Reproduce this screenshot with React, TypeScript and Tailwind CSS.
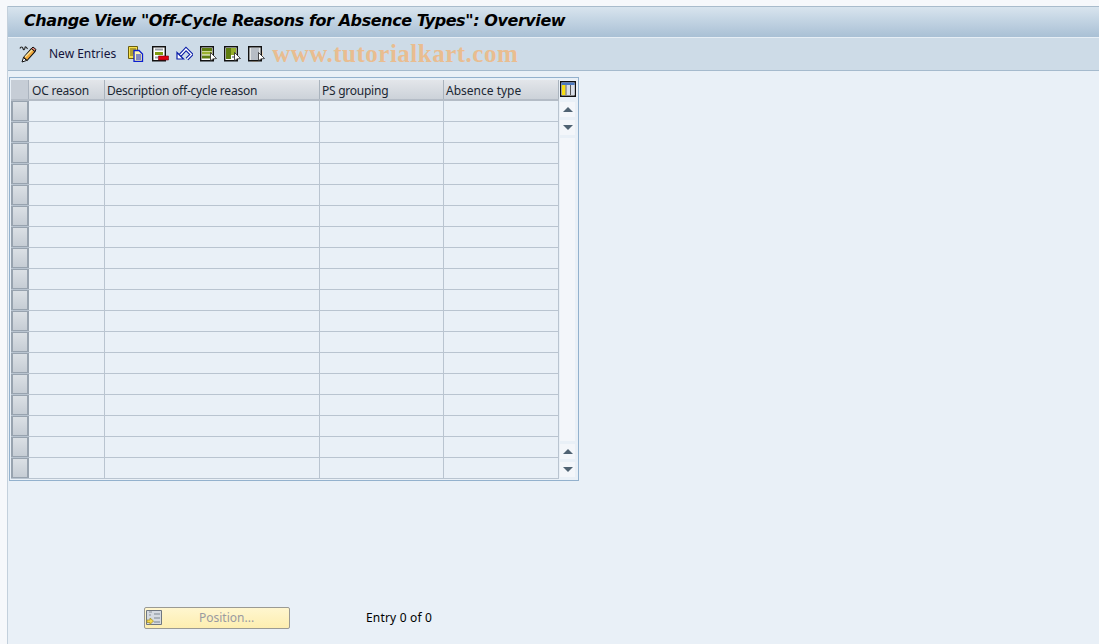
const columns = [
  { label: "OC reason", width: "w-[76px]", text: "tracking-[-0.2px] pl-[3px]" },
  { label: "Description off-cycle reason", width: "w-[215px]", text: "tracking-[-0.22px] pl-[2px]" },
  { label: "PS grouping", width: "w-[124px]", text: "tracking-[-0.25px] pl-[2px]" },
  { label: "Absence type", width: "w-[115px]", text: "tracking-[0px] pl-[2px]" },
];

const rows = Array.from({ length: 18 }, (_, i) => i);

function PencilIcon() {
  return (
    <svg width="18" height="18" viewBox="0 0 18 18" className="block">
      <path d="M1 3.500c.5-2 2.500-2 3 0s2 1 2 -1 2 .5 2.500 1.500" fill="none" stroke="#222" strokeWidth="1.100" />
      <path d="M4.500 12.500l8-9 3.500 3-8 9z" fill="#f2a93b" stroke="#111" strokeWidth="1.100" />
      <path d="M6 12l7.500-7.500" stroke="#fbe7a0" strokeWidth="1.200" />
      <path d="M12.500 3.500l1.500-1.500 3 2.500-1 2z" fill="#f08a7a" stroke="#111" />
      <path d="M4.500 12.500l-1.500 4.500 4.500-1.500z" fill="#fff" stroke="#111" />
    </svg>
  );
}

function CopyIcon() {
  return (
    <svg width="17" height="16" viewBox="0 0 17 16" className="block">
      <path d="M.5.500h9v12h-9z" fill="#f7e04a" stroke="#6a5e10" />
      <path d="M2 3h6M2 5h6M2 7h6M2 9h3" stroke="#6a5e10" />
      <path d="M6 4.500h5l3.500 3.500v7.500H6z" fill="#fff6b0" stroke="#0a1ed0" strokeWidth="1.300" />
      <path d="M8 9h5M8 11h5M8 13h5" stroke="#0a1ed0" />
    </svg>
  );
}

function DeleteIcon() {
  return (
    <svg width="17" height="16" viewBox="0 0 17 16" className="block">
      <path d="M.7.700h12.600v14H.7z" fill="#fff" stroke="#111" strokeWidth="1.400" />
      <path d="M3 3.500h8" stroke="#9aa0a8" strokeWidth="2" />
      <path d="M3 6h8v3H3z" fill="#7f9a10" />
      <path d="M3 11.500h3" stroke="#9aa0a8" strokeWidth="2" />
      <path d="M6.500 10h10v4h-10z" fill="#e00010" stroke="#70000a" strokeWidth="0.600" />
    </svg>
  );
}

function UndoIcon() {
  return (
    <svg width="17" height="16" viewBox="0 0 17 16" className="block">
      <path d="M4 9.500L10 3l5.500 5.500-4.500 4.500" fill="none" stroke="#0a1ea8" strokeWidth="3.600" />
      <path d="M4 9.500L10 3l5.500 5.500-4.500 4.500" fill="none" stroke="#fff" strokeWidth="1.400" />
      <path d="M1 6.500V13h6.500z" fill="#fff" stroke="#0a1ea8" strokeWidth="1.200" />
    </svg>
  );
}

function SelectIcon({ variant }: { variant: "block" | "corner" | "plain" }) {
  return (
    <svg width="17" height="16" viewBox="0 0 17 16" className="block">
      {variant === "plain" && <circle cx="7" cy="8" r="8" fill="#ecd8bd" />}
      <path d="M.7.700h12.600v14H.7z" fill={variant === "plain" ? "#e4e6e6" : "#fff"} stroke="#111" strokeWidth="1.400" />
      {variant === "block" && (
        <>
          <path d="M2 2h10v3H2z" fill="#5f7d10" />
          <path d="M2 5.500h10v3H2z" fill="#9ab030" />
          <path d="M2 9.500h10v3H2z" fill="#5f7d10" />
        </>
      )}
      {variant === "corner" && (
        <>
          <path d="M2 2h10v7H7v4H2z" fill="#5f7d10" />
          <path d="M7 2h5v7H7z" fill="#93ad2a" />
          <path d="M8 11h4" stroke="#9aa0aa" strokeWidth="2" />
        </>
      )}
      {variant === "plain" && (
        <path d="M3 3h8M3 5h8M3 7h8M3 9h8M3 11h8M3 13h8" stroke="#8a94a4" />
      )}
      <path d="M10.500 6.500v8.500l2-2 4-.5z" fill="#fff" stroke="#222" strokeWidth="0.800" />
    </svg>
  );
}

function ColumnsIcon() {
  return (
    <svg width="16" height="16" viewBox="0 0 16 16" className="block">
      <path d="M.7.700h14.600v14.600H.7z" fill="#fff" stroke="#111" strokeWidth="1.400" />
      <path d="M1.500 1.500h13V4h-13z" fill="#4a78c0" />
      <path d="M2 4h3.500v10H2z" fill="#f8de10" />
      <path d="M6.500 4H10v10H6.500zM11 4h3.500v10H11z" fill="#d8dee8" />
      <path d="M6 4v10M10.500 4v10" stroke="#555" />
    </svg>
  );
}

function PositionIcon() {
  return (
    <svg width="16" height="16" viewBox="0 0 16 16" className="block">
      <path d="M.5.500h15v14H.5z" fill="#d5dae0" stroke="#6f7780" />
      <path d="M8 4h6M8 8h6M8 12h6" stroke="#7d8790" />
      <path d="M3 2h3M3 5h2" stroke="#8a9199" />
      <path d="M1 10h3V8l3.500 3L4 14.500V12.500H1z" fill="#f7dc50" stroke="#a08a20" strokeWidth="0.700" />
    </svg>
  );
}

function ScrollButton({ up }: { up: boolean }) {
  return (
    <div className="w-[15px] h-[15px] bg-[#f3f6fa] flex items-center justify-center">
      <div
        className={
          up
            ? "w-0 h-0 border-x-[5px] border-x-transparent border-b-[5px] border-b-[#4f6272]"
            : "w-0 h-0 border-x-[5px] border-x-transparent border-t-[5px] border-t-[#4f6272]"
        }
      />
    </div>
  );
}

export default function App() {
  return (
    <div className="w-[1099px] h-[644px] overflow-hidden bg-[#f6f8fb] pt-[6px] pl-[7px] font-['Noto_Sans',sans-serif] text-[12px] text-[#10203a]">
      <div className="h-[638px] border-l border-[#c3d0dc] bg-[#e9f0f7]">
        <div className="h-[31px] border-t border-[#a9bccc] bg-gradient-to-b from-[#d8e4ee] to-[#a9c0d5] pl-[16px] pb-[2px] flex items-center">
          <h1 className="font-['DejaVu_Sans',sans-serif] font-bold italic text-[16px] tracking-[-0.42px] text-black whitespace-nowrap">
            Change View "Off-Cycle Reasons for Absence Types": Overview
          </h1>
        </div>

        <div className="h-[34px] border-t border-[#e6eef5] border-b border-b-[#a5bacd] bg-[#cddbe7] pl-[11px] flex items-center">
          <PencilIcon />
          <span className="ml-[12px] text-[#14143c] whitespace-nowrap">New Entries</span>
          <div className="ml-[12px] flex items-center gap-[7px]">
            <CopyIcon />
            <DeleteIcon />
            <UndoIcon />
            <SelectIcon variant="block" />
            <SelectIcon variant="corner" />
            <SelectIcon variant="plain" />
          </div>
          <span className="ml-[7px] font-['Liberation_Serif',serif] font-bold text-[25px] tracking-[0.5px] text-[#e9bd90] whitespace-nowrap">
            www.tutorialkart.com
          </span>
        </div>

        <div className="ml-[1px] mt-[6px] w-[570px] h-[404px] border border-[#93b1cd] bg-[#e9f0f7] px-[1px] pt-[2px] pb-[1px] flex">
          <div className="w-[548px]">
            <div className="h-[21px] flex bg-gradient-to-b from-[#e3e6ea] to-[#ccd2d9] border-b-2 border-[#b4bcc6]">
              <div className="w-[18px] shrink-0 bg-[#c6cdd6] border-r border-[#aab3be]" />
              {columns.map((col) => (
                <div
                  key={col.label}
                  className={`${col.width} ${col.text} shrink-0 border-r border-[#a9b3bd] leading-[21px] whitespace-nowrap text-[#1b2733]`}
                >
                  {col.label}
                </div>
              ))}
            </div>
            {rows.map((row) => (
              <div key={row} className="h-[21px] flex border-b border-[#b9c4d0]">
                <div className="w-[18px] shrink-0 border-x-2 border-y border-[#98a3af] bg-gradient-to-b from-[#dbe0e5] to-[#c6cdd5]" />
                {columns.map((col) => (
                  <div key={col.label} className={`${col.width} shrink-0 border-r border-[#b9c4d0]`} />
                ))}
              </div>
            ))}
          </div>

          <div className="flex-1 pl-[1px] flex flex-col bg-[#e9f0f7]">
            <div className="h-[21px] flex items-start pt-[1px]">
              <ColumnsIcon />
            </div>
            <div className="w-[15px] flex-1 flex flex-col gap-[3px] pt-[1px] pb-[2px]">
              <ScrollButton up />
              <ScrollButton up={false} />
              <div className="flex-1 bg-[#f3f6fa]" />
              <ScrollButton up />
              <ScrollButton up={false} />
            </div>
          </div>
        </div>

        <div className="mt-[126px] ml-[136px] flex items-center">
          <button className="w-[146px] h-[22px] rounded-[2px] border border-[#9a9a94] bg-gradient-to-b from-[#fff6cf] to-[#fdeeb0] flex items-center pl-[1px] text-[#9a9aa0]">
            <PositionIcon />
            <span className="ml-[37px]">Position...</span>
          </button>
          <span className="ml-[76px] text-black whitespace-nowrap tracking-[0.18px]">Entry 0 of 0</span>
        </div>
      </div>
    </div>
  );
}
